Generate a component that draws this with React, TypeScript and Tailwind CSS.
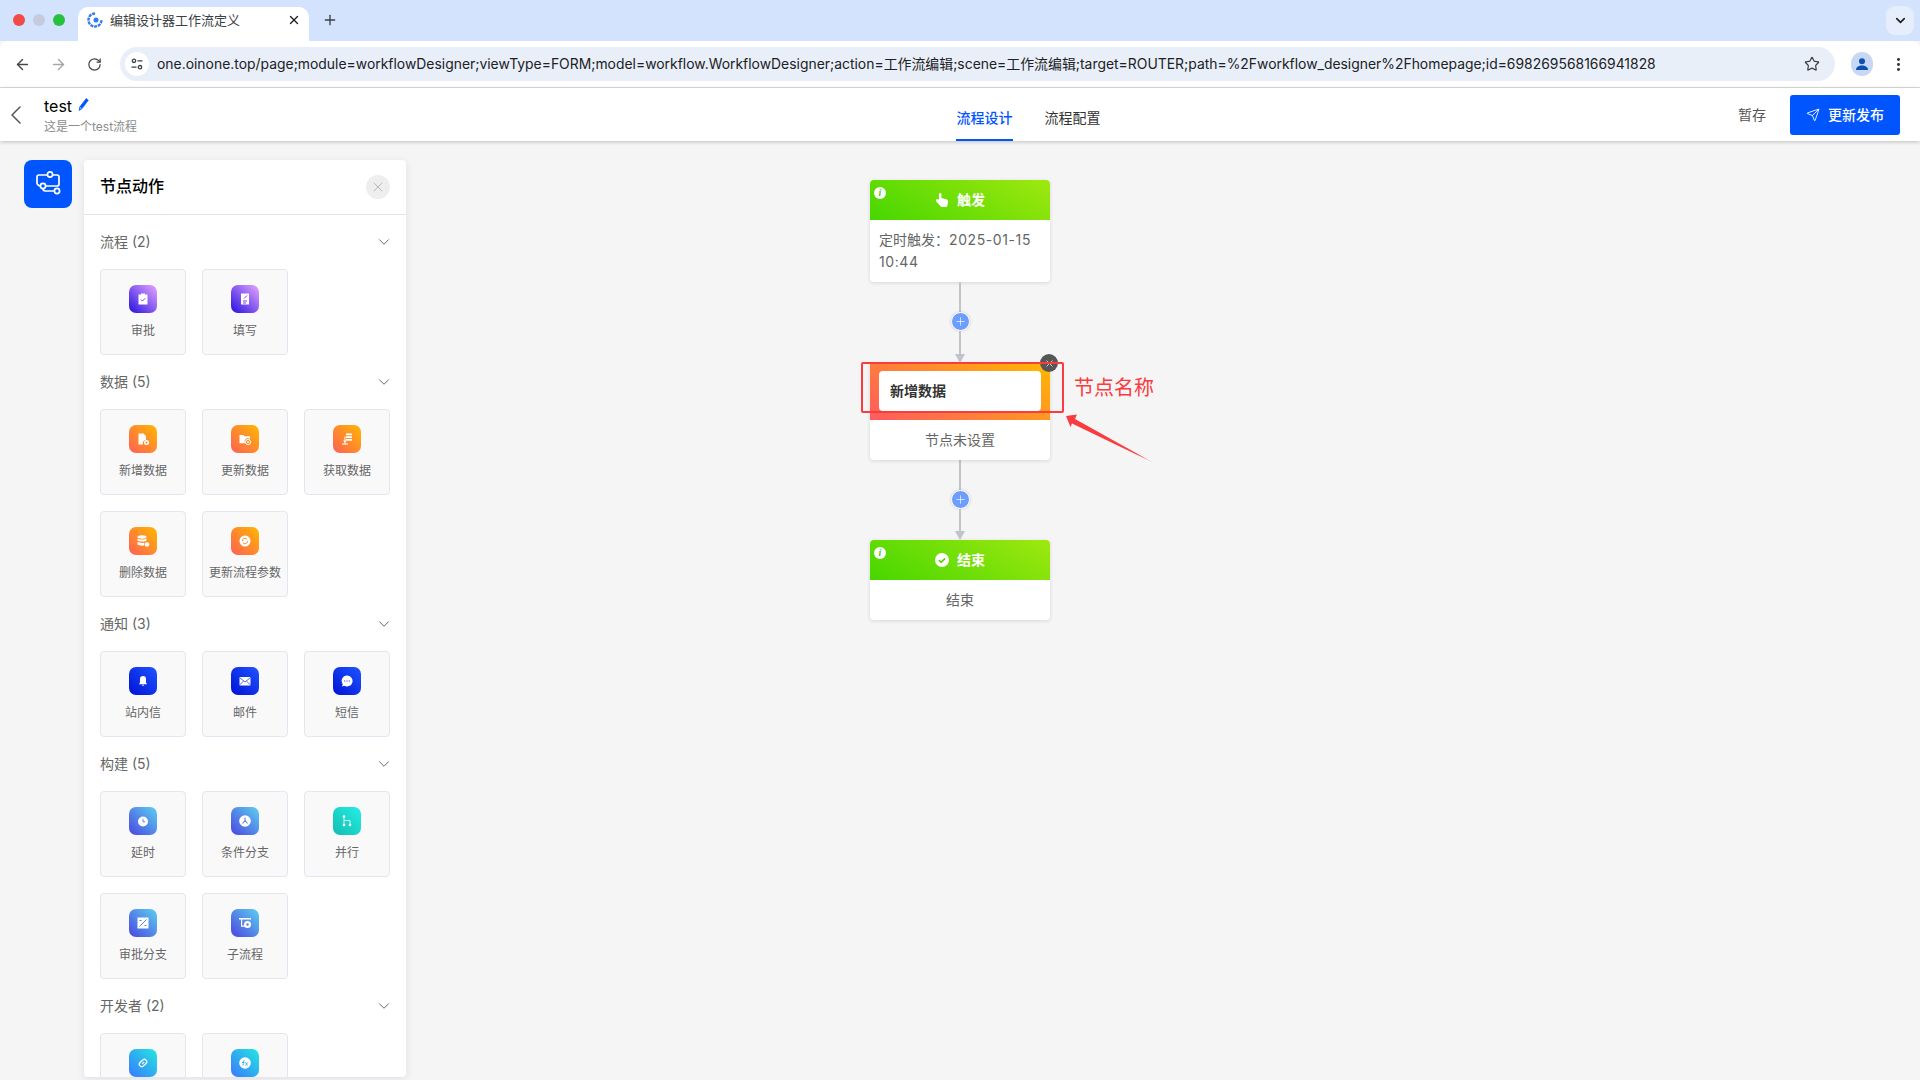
import type { ReactNode } from 'react';

import {
  ArrowLeft,
  ArrowRight,
  ChevronDown,
  ChevronLeft,
  EllipsisVertical,
  Plus,
  RotateCw,
  Send,
  Star,
  X,
} from 'lucide-react';

const URL_TEXT =
  'one.oinone.top/page;module=workflowDesigner;viewType=FORM;model=workflow.WorkflowDesigner;action=工作流编辑;scene=工作流编辑;target=ROUTER;path=%2Fworkflow_designer%2Fhomepage;id=698269568166941828';

const tones = {
  purple: 'bg-[linear-gradient(45deg,#2410e0,#e9a6ff)]',
  orange: 'bg-[linear-gradient(45deg,#ff5f55,#ffb800)]',
  navy: 'bg-[linear-gradient(45deg,#0012d6,#1f55ff)]',
  sky: 'bg-[linear-gradient(45deg,#4a45e0,#5cd0f0)]',
  teal: 'bg-[linear-gradient(45deg,#12bdb0,#25eee6)]',
  dev: 'bg-[linear-gradient(45deg,#3a78ff,#22e8e0)]',
};

type Tone = keyof typeof tones;

const Glyph = ({ children }: { children: ReactNode }) => (
  <svg width="14" height="14" viewBox="0 0 14 14" fill="white">
    {children}
  </svg>
);

const glyphs: Record<string, ReactNode> = {
  approve: (
    <Glyph>
      <path d="M2.5 2.5h2.5V1.5h4v1h2.5v10h-9z" />
      <path d="M4.8 7.5l1.6 1.6 2.8-2.8" fill="none" stroke="#7a3ff0" strokeWidth="1" />
    </Glyph>
  ),
  fill: (
    <Glyph>
      <path d="M3 1.5h8v11H3z" />
      <path d="M5 9h4M5 11h3M6 6.5l3-3" fill="none" stroke="#7a3ff0" strokeWidth="1" />
    </Glyph>
  ),
  addData: (
    <Glyph>
      <path d="M2.5 1.5h5l2.5 2.5v4a3.2 3.2 0 0 0-3 4.5h-4.500z" />
      <circle cx="10.500" cy="10.500" r="2.500" />
      <path d="M9.300 10.500h2.400M10.500 9.300v2.400" stroke="#ff8a3a" strokeWidth="0.800" />
    </Glyph>
  ),
  updateData: (
    <Glyph>
      <path d="M1.500 3h4l1 1.200h5.500v3a3 3 0 0 0-4.500 4H1.500z" />
      <circle cx="10" cy="10" r="2.600" fill="none" stroke="white" strokeWidth="1" />
      <circle cx="10" cy="10" r="1" />
    </Glyph>
  ),
  getData: (
    <Glyph>
      <path d="M6 1.500h6v1.800H6zM6 4.200h6V6H6zM6 6.900h6v1.800H6zM4.500 4.500h1v7h-1zM2 11.500h6v1H2z" />
      <path d="M3 8.500h4l-2 2z" />
    </Glyph>
  ),
  removeData: (
    <Glyph>
      <ellipse cx="6" cy="3" rx="4.500" ry="1.700" />
      <path d="M1.500 4.500c1 1.300 8 1.300 9 0v2c-1 1.300-8 1.300-9 0zM1.500 7.800c1 1.300 6 1.300 7 .8-.5 1-.5 2-.2 3-2.300.4-5.800 0-6.800-1.300z" />
      <circle cx="11" cy="10.500" r="2.300" />
    </Glyph>
  ),
  refresh: (
    <Glyph>
      <circle cx="7" cy="7" r="5.500" />
      <path d="M4.300 7a2.700 2.700 0 0 1 4.800-1.700M9.700 7a2.700 2.700 0 0 1-4.800 1.700" fill="none" stroke="#ff8a3a" strokeWidth="1" />
    </Glyph>
  ),
  bell: (
    <Glyph>
      <path d="M7 2a3 3 0 0 1 3 3v3.500l1 1.700H3l1-1.700V5a3 3 0 0 1 3-3z" />
      <path d="M5.800 10.800h2.400L7 12.300z" />
    </Glyph>
  ),
  mail: (
    <Glyph>
      <path d="M1.500 3h11v8.500h-11z" />
      <path d="M1.500 3.500L7 8l5.500-4.500M1.500 11l4-3.800M12.500 11l-4-3.800" fill="none" stroke="#0a2ee0" strokeWidth="0.700" />
    </Glyph>
  ),
  sms: (
    <Glyph>
      <path d="M7 1.500a5.500 5.500 0 1 1-2.800 10.200L2 12.500l.7-2.300A5.500 5.500 0 0 1 7 1.500z" />
      <path d="M4.200 7h1M6.500 7h1M8.800 7h1" stroke="#0a2ee0" strokeWidth="1" />
    </Glyph>
  ),
  delay: (
    <Glyph>
      <circle cx="7" cy="7.500" r="5" />
      <path d="M2.500 2.500l2 .5M7 5v2.800h2.200" fill="none" stroke="#5a80e8" strokeWidth="1" />
    </Glyph>
  ),
  branch: (
    <Glyph>
      <circle cx="7" cy="7" r="5.800" />
      <path d="M7 3.500v3M7 6.500l-2.500 3M7 6.500l2.500 3" fill="none" stroke="#5a80e8" strokeWidth="1.100" />
    </Glyph>
  ),
  parallel: (
    <Glyph>
      <circle cx="4" cy="2.500" r="1.300" />
      <circle cx="4" cy="11" r="1.300" />
      <circle cx="10" cy="11" r="1.300" />
      <path d="M4 3v8M4 6.500h6v4" fill="none" stroke="white" strokeWidth="0.800" />
    </Glyph>
  ),
  approveBranch: (
    <Glyph>
      <path d="M1.500 1.500h11v11h-11z" />
      <path d="M3.500 10.500l7-7M3.500 4.500h2M8.500 9.500h2" fill="none" stroke="#5a80e8" strokeWidth="1" />
    </Glyph>
  ),
  subflow: (
    <Glyph>
      <path d="M1 2h12v1.500H1zM3 3.500h1.200v6H7v1.200H3z" />
      <circle cx="9.500" cy="8.500" r="3.500" />
      <circle cx="9.500" cy="8.500" r="1.200" fill="#5a80e8" />
    </Glyph>
  ),
  link: (
    <Glyph>
      <path
        d="M6 8l2-2M5.500 5L4 6.500a2.400 2.400 0 0 0 3.400 3.400L9 8.500M8.500 9L10 7.500A2.400 2.400 0 0 0 6.600 4.100L5 5.500"
        fill="none"
        stroke="white"
        strokeWidth="1.200"
      />
    </Glyph>
  ),
  fn: (
    <Glyph>
      <circle cx="7" cy="7" r="5.800" />
      <path d="M6.500 4.500c-1.500 0-1 1.500-1.500 5M4 6.500h2.500M7.500 6.500l2 3M9.500 6.500l-2 3" fill="none" stroke="#2fa8f0" strokeWidth="0.900" />
    </Glyph>
  ),
};

type PaletteItem = { label?: string; glyph: string };
type PaletteGroup = { title: string; tone: Tone; items: PaletteItem[]; tones?: Tone[] };

const groups: PaletteGroup[] = [
  {
    title: '流程 (2)',
    tone: 'purple',
    items: [
      { label: '审批', glyph: 'approve' },
      { label: '填写', glyph: 'fill' },
    ],
  },
  {
    title: '数据 (5)',
    tone: 'orange',
    items: [
      { label: '新增数据', glyph: 'addData' },
      { label: '更新数据', glyph: 'updateData' },
      { label: '获取数据', glyph: 'getData' },
      { label: '删除数据', glyph: 'removeData' },
      { label: '更新流程参数', glyph: 'refresh' },
    ],
  },
  {
    title: '通知 (3)',
    tone: 'navy',
    items: [
      { label: '站内信', glyph: 'bell' },
      { label: '邮件', glyph: 'mail' },
      { label: '短信', glyph: 'sms' },
    ],
  },
  {
    title: '构建 (5)',
    tone: 'sky',
    tones: ['sky', 'sky', 'teal', 'sky', 'sky'],
    items: [
      { label: '延时', glyph: 'delay' },
      { label: '条件分支', glyph: 'branch' },
      { label: '并行', glyph: 'parallel' },
      { label: '审批分支', glyph: 'approveBranch' },
      { label: '子流程', glyph: 'subflow' },
    ],
  },
  {
    // labels of this row are below the panel's fold
    title: '开发者 (2)',
    tone: 'dev',
    items: [{ glyph: 'link' }, { glyph: 'fn' }],
  },
];

const BrowserChrome = () => (
  <>
    <div className="flex h-[41px] shrink-0 items-start bg-[#d3e3fd]">
      <div className="flex h-[41px] items-center gap-[8px] pb-[1px] pl-[13px]">
        <span className="h-[12px] w-[12px] rounded-full bg-[#f04b47]" />
        <span className="h-[12px] w-[12px] rounded-full bg-[#c3cbdc]" />
        <span className="h-[12px] w-[12px] rounded-full bg-[#28c03f]" />
      </div>
      <div className="mt-[7px] ml-[13px] flex h-[34px] w-[231px] items-center rounded-t-[10px] bg-white pr-[8px] pb-[8px] pl-[9px]">
        <svg width="16" height="16" viewBox="0 0 16 16" fill="none">
          <path d="M8 1.500a6.500 6.500 0 1 0 6.500 6.500" stroke="#2f7bf0" strokeWidth="2.400" strokeDasharray="3 0.800" />
          <circle cx="9" cy="8" r="2.500" fill="#2f7bf0" />
        </svg>
        <span className="ml-[7px] flex-1 text-[13px] leading-none text-[#3c4043]">编辑设计器工作流定义</span>
        <X size={14} strokeWidth={2.400} className="text-[#1f1f1f]" />
      </div>
      <Plus size={16} strokeWidth={2} className="mt-[12px] ml-[13px] text-[#3c4043]" />
      <div className="mt-[6px] mr-[6px] ml-auto flex h-[29px] w-[28px] items-center justify-center rounded-[9px] bg-[#e6edfb]">
        <ChevronDown size={15} strokeWidth={2.600} className="text-[#1f1f1f]" />
      </div>
    </div>
    <div className="flex h-[47px] shrink-0 items-center rounded-t-[8px] border-b border-[#dadce0] bg-white">
      <ArrowLeft size={17} strokeWidth={2} className="ml-[14px] text-[#474747]" />
      <ArrowRight size={17} strokeWidth={2} className="ml-[19px] text-[#a5a7aa]" />
      <RotateCw size={15} strokeWidth={2} className="ml-[20px] text-[#474747]" />
      <div className="ml-[18px] flex h-[34px] w-[1715px] items-center rounded-full bg-[#e9eff9] pl-[5px]">
        <div className="flex h-[24px] w-[24px] items-center justify-center rounded-full bg-white">
          <svg width="14" height="14" viewBox="0 0 14 14" fill="none" stroke="#3c4043" strokeWidth="1.300">
            <circle cx="4" cy="3.800" r="1.700" />
            <circle cx="10" cy="10.200" r="1.700" />
            <path d="M7.500 3.800h5M1.500 10.200h5" />
          </svg>
        </div>
        <span className="ml-[8px] flex-1 pt-[2px] text-[13.910px] leading-none whitespace-nowrap text-[#202124]">
          {URL_TEXT}
        </span>
        <Star size={16} strokeWidth={1.800} className="mr-[15px] text-[#3c4043]" />
      </div>
      <div className="ml-[16px] flex h-[24px] w-[22px] items-center justify-center rounded-full bg-[#c7d8f5]">
        <svg width="14" height="14" viewBox="0 0 14 14" fill="#0b4fb3">
          <circle cx="7" cy="4.200" r="3" />
          <path d="M1 13c0-3 2.500-4.500 6-4.500s6 1.500 6 4.500z" />
        </svg>
      </div>
      <EllipsisVertical size={17} strokeWidth={2.200} className="ml-[17px] text-[#303134]" />
    </div>
  </>
);

const AppHeader = () => (
  <header className="relative z-20 grid h-[53px] shrink-0 grid-cols-[956px_auto_1fr] items-center bg-white shadow-[0_1px_4px_rgba(0,0,0,0.22)]">
    <div className="flex items-center">
      <ChevronLeft size={32} strokeWidth={1.100} className="text-[#555]" />
      <div className="ml-[12px]">
        <div className="flex items-center gap-[5px] text-[16px] leading-[22px] text-black">
          test
          <svg width="13" height="15" viewBox="0 0 12 14" fill="none" className="mb-[2px]">
            <path d="M8.500 1.500l2 1.500-6 8-2.500 1.500.3-3z" fill="#0055ff" stroke="#0055ff" strokeWidth="0.600" />
            <path d="M2.500 9.800l1.600 1.100" stroke="white" strokeWidth="0.800" />
          </svg>
        </div>
        <div className="mt-[1px] text-[12px] leading-[17px] text-[#8c8c8c]">这是一个test流程</div>
      </div>
    </div>
    <nav className="flex h-full items-end gap-[31px]">
      <div className="flex h-[33px] w-[57px] items-start justify-center border-b-2 border-[#0055ff] text-[14px] leading-[20px] font-medium text-[#0055ff]">
        流程设计
      </div>
      <div className="flex h-[33px] w-[57px] items-start justify-center text-[14px] leading-[20px] text-[#333]">
        流程配置
      </div>
    </nav>
    <div className="flex items-center justify-end pr-[20px]">
      <span className="text-[14px] text-[#555]">暂存</span>
      <button className="ml-[24px] flex h-[40px] w-[110px] items-center justify-center gap-[8px] rounded-[3px] bg-[#0055ff] text-[14px] font-medium text-white">
        <Send size={14} strokeWidth={1.500} />
        更新发布
      </button>
    </div>
  </header>
);

const Palette = () => (
  <div className="absolute top-[19px] left-[24px] z-10 flex items-start gap-[12px]">
    <div className="flex h-[48px] w-[48px] items-center justify-center rounded-[8px] bg-[#0055ff]">
      <svg width="28" height="28" viewBox="0 0 28 28" fill="none" stroke="white" strokeWidth="1.700">
        <circle cx="16" cy="4.500" r="2.600" />
        <circle cx="9" cy="16" r="2.600" />
        <circle cx="23" cy="21" r="2.600" />
        <path d="M13.400 5H5a2 2 0 0 0-2 2v6c0 1.300 1.500 3 3.400 3M18.600 5H23a2 2 0 0 1 2 2v7a2 2 0 0 1-2 2H11.600M9 18.600c0 1.500 1 2.400 2.400 2.400h9" />
      </svg>
    </div>
    <aside className="flex h-[917px] w-[322px] flex-col overflow-hidden rounded-[4px] bg-white shadow-[0_2px_8px_rgba(40,50,90,0.1)]">
      <div className="flex h-[55px] shrink-0 items-center justify-between border-b border-[#e4e5ec] pr-[16px] pl-[16px]">
        <span className="pb-[2px] text-[16px] font-medium text-black">节点动作</span>
        <span className="flex h-[24px] w-[24px] items-center justify-center rounded-full bg-[#eeeeee]">
          <X size={16} strokeWidth={1.200} className="text-[#aaaaaa]" />
        </span>
      </div>
      <div className="flex-1 overflow-hidden px-[16px]">
        {groups.map((group) => (
          <section key={group.title}>
            <div className="flex h-[54px] items-center justify-between">
              <span className="pb-[2px] text-[14px] text-[#666]">{group.title}</span>
              <ChevronDown size={18} strokeWidth={1.200} className="mr-[-3px] text-[#555]" />
            </div>
            <div className="grid grid-cols-3 gap-[16px]">
              {group.items.map((item, index) => (
                <div
                  key={item.glyph}
                  className="flex h-[86px] flex-col items-center rounded-[4px] border border-[#e3e5ef] bg-[#f9f9fa] pt-[15px]"
                >
                  <span
                    className={`flex h-[28px] w-[28px] items-center justify-center rounded-[7px] ${tones[group.tones?.[index] ?? group.tone]}`}
                  >
                    {glyphs[item.glyph]}
                  </span>
                  {item.label && (
                    <span className="mt-[9px] text-[12px] leading-[18px] whitespace-nowrap text-[#666]">
                      {item.label}
                    </span>
                  )}
                </div>
              ))}
            </div>
          </section>
        ))}
      </div>
    </aside>
  </div>
);

const Connector = ({ tail }: { tail: string }) => (
  <div className="flex w-[20px] flex-col items-center">
    <div className="h-[30px] w-[2px] bg-[#c4c4c8]" />
    <div className="flex h-[19px] w-[19px] shrink-0 items-center justify-center rounded-full border border-white bg-[#6d9eff] shadow-[0_0_3px_rgba(0,0,0,0.18)]">
      <Plus size={13} strokeWidth={1.200} className="text-white" />
    </div>
    <div className={`w-[2px] bg-[#c4c4c8] ${tail}`} />
    <div className="h-0 w-0 border-x-[5px] border-t-[9px] border-x-transparent border-t-[#c0c2cc]" />
  </div>
);

const InfoDot = () => (
  <span className="absolute top-[7px] left-[4px] flex h-[12px] w-[12px] items-center justify-center rounded-full bg-white font-['Liberation_Serif',serif] text-[10px] leading-none font-bold text-[#4bd406] italic">
    i
  </span>
);

const NodeHead = ({ icon, title }: { icon: ReactNode; title: string }) => (
  <div className="relative flex h-[40px] items-center justify-center gap-[8px] rounded-t-[4px] bg-[linear-gradient(30deg,#47d600,#9fe80f)] pb-[1px] text-[14px] font-bold text-white">
    <InfoDot />
    {icon}
    {title}
  </div>
);

const Flow = () => (
  <main className="flex h-full flex-col items-center pt-[39px]">
    <div className="w-[180px] rounded-[4px] bg-white shadow-[0_1px_4px_rgba(0,0,0,0.12)]">
      <NodeHead
        title="触发"
        icon={
          <svg width="14" height="16" viewBox="0 0 14 16" fill="white">
            <path d="M4 7V2.200a1.200 1.200 0 0 1 2.400 0V6l5 1.300c1.200.4 1.800 1.300 1.600 2.500l-.6 3.700c-.2 1-1 1.500-2 1.500H7c-.7 0-1.200-.3-1.700-.9L1.200 9.500c-.5-.7-.4-1.500.2-1.900.6-.4 1.300-.3 1.800.2z" />
          </svg>
        }
      />
      <div className="h-[62px] px-[9px] pt-[9px] text-[14px] leading-[22px] text-[#666]">
        定时触发：<span className="tracking-[0.6px]">2025-01-15 10:44</span>
      </div>
    </div>
    <Connector tail="h-[23px]" />
    <div className="relative w-[180px] rounded-[4px] bg-white shadow-[0_1px_4px_rgba(0,0,0,0.12)]">
      <div className="h-[57px] bg-[linear-gradient(30deg,#ff5a5f,#ffb800)] px-[9px] pt-[8px]">
        <div className="flex h-[40px] items-center rounded-[4px] bg-white pb-[2px] pl-[11px] text-[14px] font-bold text-[#333]">
          新增数据
        </div>
      </div>
      <div className="flex h-[40px] items-center justify-center pb-[2px] text-[14px] text-[#666]">节点未设置</div>
      <span className="absolute top-[-9px] right-[-8px] flex h-[18px] w-[18px] items-center justify-center rounded-full bg-[#565656]">
        <X size={11} strokeWidth={1.500} className="text-white" />
      </span>
      <div className="absolute top-[-1px] left-[-9px] h-[51px] w-[203px] rounded-[2px] border-2 border-[#fa3b3f]" />
      <span className="absolute top-[11px] left-[204px] text-[20px] leading-[28px] whitespace-nowrap text-[#fa3b3f]">
        节点名称
      </span>
      <svg className="absolute top-[50px] left-[194px]" width="92" height="52" viewBox="0 0 92 52">
        <defs>
          <linearGradient id="arrowFade" x1="0" y1="0" x2="1" y2="1">
            <stop offset="0.800" stopColor="#fa3b3f" />
            <stop offset="1" stopColor="#fa3b3f" stopOpacity="0.300" />
          </linearGradient>
        </defs>
        <path d="M2 3L13 1.500 11 6 90 50 8 10.500 6.500 14z" fill="url(#arrowFade)" />
      </svg>
    </div>
    <Connector tail="h-[22px]" />
    <div className="w-[180px] rounded-[4px] bg-white shadow-[0_1px_4px_rgba(0,0,0,0.12)]">
      <NodeHead
        title="结束"
        icon={
          <svg width="14" height="14" viewBox="0 0 14 14">
            <circle cx="7" cy="7" r="7" fill="white" />
            <path d="M3.800 7.200l2.300 2.200 4.100-4" fill="none" stroke="#55d905" strokeWidth="1.600" />
          </svg>
        }
      />
      <div className="flex h-[40px] items-center justify-center pb-[2px] text-[14px] text-[#666]">结束</div>
    </div>
  </main>
);

export default function App() {
  return (
    <div className="flex h-[1080px] w-[1920px] flex-col overflow-hidden bg-[#f5f5f5] font-['Inter','Noto_Sans_CJK_SC',sans-serif]">
      <BrowserChrome />
      <AppHeader />
      <div className="relative min-h-0 flex-1">
        <Palette />
        <Flow />
      </div>
    </div>
  );
}
